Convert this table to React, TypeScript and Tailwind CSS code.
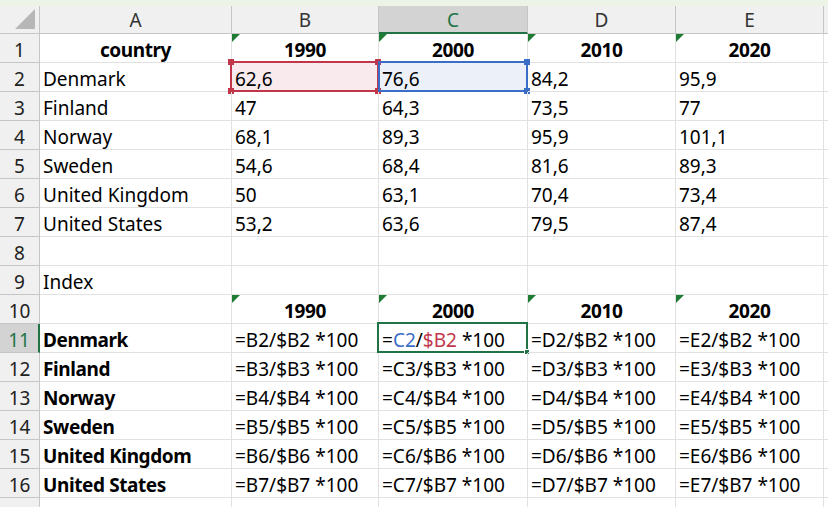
import type { ReactNode } from 'react'

const font = { fontFamily: '"Noto Sans", "Open Sans", sans-serif' }

const cols = ['A', 'B', 'C', 'D', 'E', '']

const data: string[][] = [
  ['Denmark', '62,6', '76,6', '84,2', '95,9'],
  ['Finland', '47', '64,3', '73,5', '77'],
  ['Norway', '68,1', '89,3', '95,9', '101,1'],
  ['Sweden', '54,6', '68,4', '81,6', '89,3'],
  ['United Kingdom', '50', '63,1', '70,4', '73,4'],
  ['United States', '53,2', '63,6', '79,5', '87,4'],
]

const years = ['1990', '2000', '2010', '2020']

function Triangle() {
  return (
    <svg className="absolute left-0 top-0" width="8" height="8" viewBox="0 0 8 8">
      <path d="M0 0 H8 L0 8 Z" fill="#1e7b34" />
    </svg>
  )
}

function Handle({ className, color }: { className: string; color: string }) {
  return <span className={`absolute h-[6px] w-[6px] ${color} ${className}`} />
}

function Cell({
  children,
  bold,
  center,
  className = '',
}: {
  children?: ReactNode
  bold?: boolean
  center?: boolean
  className?: string
}) {
  return (
    <div
      className={[
        'relative flex h-[29px] items-end overflow-visible whitespace-nowrap border-b border-r border-[#e1e1e1] px-[3px] pb-[1px] text-[19px] leading-[22px] text-black',
        bold ? 'font-bold tracking-[-0.4px]' : '',
        center ? 'justify-center' : '',
        className,
      ].join(' ')}
    >
      {children}
    </div>
  )
}

function RowHead({ n, active }: { n?: number; active?: boolean }) {
  return (
    <div
      className={[
        'flex h-[29px] items-end justify-center border-b pb-[1px] text-[19px] leading-[22px]',
        active
          ? 'border-r-2 border-b-[#c6c6c6] border-r-[#217346] bg-[#d3d3d3] text-[#217346]'
          : 'border-r border-[#c6c6c6] bg-[#f0f0f0] text-[#222]',
      ].join(' ')}
    >
      {n}
    </div>
  )
}

function YearRow({ n }: { n: number }) {
  return (
    <>
      <RowHead n={n} />
      <Cell bold center>
        {n === 1 ? 'country' : ''}
      </Cell>
      {years.map((y) => (
        <Cell key={y} bold center>
          <Triangle />
          {y}
        </Cell>
      ))}
      <Cell />
    </>
  )
}

export default function App() {
  const letters = ['B', 'C', 'D', 'E']
  return (
    <div className="h-[507px] w-[828px] overflow-hidden bg-white" style={font}>
      <div className="h-[6px] bg-[#eef3e7]" />
      <div className="grid grid-cols-[40px_192px_147px_149px_148px_148px_1fr]">
        {/* column headers */}
        <div className="relative h-[28px] border-b border-r border-[#c6c6c6] bg-[#f0f0f0]">
          <svg className="absolute bottom-[4px] right-[4px]" width="20" height="20" viewBox="0 0 20 20">
            <path d="M20 0 V20 H0 Z" fill="#b7b7b7" />
          </svg>
        </div>
        {cols.map((c) =>
          c === 'C' ? (
            <div
              key={c}
              className="flex h-[28px] items-end justify-center border-b-2 border-r border-b-[#217346] border-r-[#c6c6c6] bg-[#d3d3d3] text-[19px] leading-[24px] text-[#217346]"
            >
              {c}
            </div>
          ) : (
            <div
              key={c || 'f'}
              className="flex h-[28px] items-end justify-center border-b border-r border-[#c6c6c6] bg-[#f0f0f0] pb-[1px] text-[19px] leading-[24px] text-[#333]"
            >
              {c}
            </div>
          )
        )}

        <YearRow n={1} />

        {data.map((row, i) => (
          <div key={row[0]} className="contents">
            <RowHead n={i + 2} />
            {row.map((v, j) => (
              <Cell key={j}>
                {i === 0 && j === 1 && (
                  <span className="absolute -left-[2px] -top-[2px] bottom-[-1px] right-[-1px] border-2 border-[#c2364a] bg-[#c2364a]/10">
                    <Handle color="bg-[#c2364a]" className="-left-[4px] -top-[4px]" />
                    <Handle color="bg-[#c2364a]" className="-right-[4px] -top-[4px]" />
                    <Handle color="bg-[#c2364a]" className="-bottom-[4px] -left-[4px]" />
                    <Handle color="bg-[#c2364a]" className="-bottom-[4px] -right-[4px]" />
                  </span>
                )}
                {i === 0 && j === 2 && (
                  <span className="absolute -left-[1px] -top-[2px] bottom-[-1px] right-[-1px] border-2 border-[#3a6ec6] bg-[#3a6ec6]/10">
                    <Handle color="bg-[#3a6ec6]" className="-right-[4px] -top-[4px]" />
                    <Handle color="bg-[#3a6ec6]" className="-bottom-[4px] -right-[4px]" />
                  </span>
                )}
                <span className="relative">{v}</span>
              </Cell>
            ))}
            <Cell />
          </div>
        ))}

        <RowHead n={8} />
        <Cell />
        <Cell />
        <Cell />
        <Cell />
        <Cell />
        <Cell />

        <RowHead n={9} />
        <Cell>Index</Cell>
        <Cell />
        <Cell />
        <Cell />
        <Cell />
        <Cell />

        <YearRow n={10} />

        {data.map((row, i) => {
          const r = i + 2
          return (
            <div key={'f' + row[0]} className="contents">
              <RowHead n={i + 11} active={i === 0} />
              <Cell bold>{row[0]}</Cell>
              {letters.map((l) =>
                i === 0 && l === 'C' ? (
                  <Cell key={l}>
                    <span className="absolute -left-[2px] -top-[2px] bottom-[-1px] right-[-1px] border-2 border-[#217346]">
                      <span className="absolute -bottom-[4px] -right-[4px] h-[6px] w-[6px] border border-white bg-[#217346]" />
                    </span>
                    <span className="relative">
                      =<span className="text-[#3a6ec6]">C2</span>/<span className="text-[#c2364a]">$B2</span> *100
                    </span>
                  </Cell>
                ) : (
                  <Cell key={l}>{`=${l}${r}/$B${r} *100`}</Cell>
                )
              )}
              <Cell />
            </div>
          )
        })}

        <RowHead />
        <Cell />
        <Cell />
        <Cell />
        <Cell />
        <Cell />
        <Cell />
      </div>
    </div>
  )
}
